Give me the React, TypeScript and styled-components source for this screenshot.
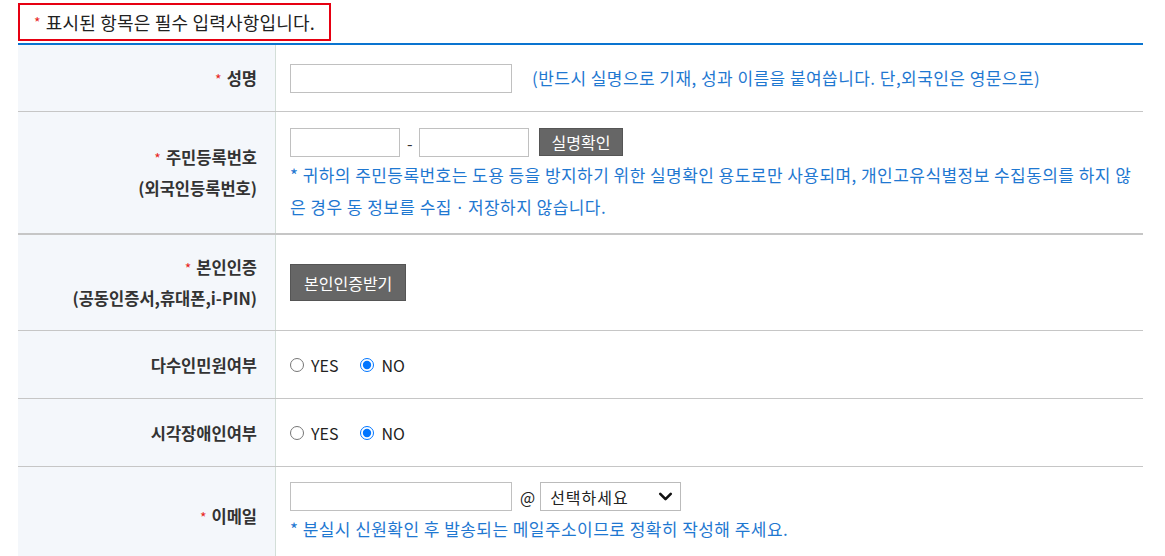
import styled, { createGlobalStyle } from "styled-components";
import { ChevronDown } from "lucide-react";

const GlobalStyle = createGlobalStyle`
	body {
		margin: 0;
		background: #fff;
		font-family: "Noto Sans CJK KR", "Noto Sans", sans-serif;
		color: #333;
	}
	* { box-sizing: border-box; }
`;

const Page = styled.div`
	width: 1143px;
	padding: 3px 0 0 18px;
`;

const Notice = styled.div`
	display: inline-flex;
	align-items: center;
	height: 38px;
	padding: 0 14px;
	border: 2px solid #e60012;
	font-size: 18px;
	letter-spacing: 0.2px;
	color: #222;
`;

const Star = styled.span<{ $tone?: "red" | "blue" }>`
	color: ${(p) => (p.$tone === "blue" ? "#1f78d1" : "#e8271f")};
	font-size: 14px;
	font-weight: 400;
	margin-right: 5px;
`;

const FormTable = styled.div`
	margin-top: 2px;
	border-top: 2px solid #0a74d0;
`;

const Row = styled.div<{ $height: number; $thick?: boolean }>`
	display: grid;
	grid-template-columns: 258px 1fr;
	min-height: ${(p) => p.$height}px;
	border-bottom: ${(p) => (p.$thick ? 2 : 1)}px solid #c6c6c6;
`;

const Label = styled.div`
	display: flex;
	flex-direction: column;
	justify-content: center;
	align-items: flex-end;
	padding-right: 18px;
	background: #f4f7fb;
	border-right: 1px solid #d3ded8;
	font-size: 16.5px;
	font-weight: 700;
	line-height: 30px;
	color: #333;
	text-align: right;
`;

const Value = styled.div<{ $top?: number }>`
	display: flex;
	flex-direction: column;
	justify-content: ${(p) => (p.$top ? "flex-start" : "center")};
	padding: ${(p) => (p.$top ? `${p.$top}px 0 0 14px` : "0 0 0 14px")};
`;

const Line = styled.div`
	display: flex;
	align-items: center;
`;

const TextInput = styled.input<{ $width: number }>`
	width: ${(p) => p.$width}px;
	height: 29px;
	border: 1px solid #c0c0c0;
	background: #fff;
	font-size: 15px;
	padding: 0 6px;
	margin: 0;
`;

const Dash = styled.span`
	margin: 0 6px 0 7px;
	font-size: 16px;
	color: #333;
`;

const Help = styled.p<{ $inline?: boolean }>`
	margin: ${(p) => (p.$inline ? "0 0 0 20px" : "2px 0 0")};
	font-size: 17px;
	letter-spacing: 0.45px;
	line-height: 32px;
	color: #1f78d1;
	word-break: break-all;
`;

const DarkButton = styled.button<{ $tall?: boolean }>`
	margin-left: ${(p) => (p.$tall ? 0 : 10)}px;
	height: ${(p) => (p.$tall ? 37 : 28)}px;
	padding: 0 ${(p) => (p.$tall ? 13 : 12)}px;
	background: #666;
	border: 1px solid #555;
	color: #fff;
	font-family: inherit;
	font-size: 16px;
	cursor: pointer;
	align-self: flex-start;
`;

const RadioLabel = styled.label`
	display: inline-flex;
	align-items: center;
	gap: 7px;
	margin-right: 22px;
	font-size: 16px;
	color: #222;
`;

const Radio = styled.input`
	width: 14px;
	height: 14px;
	margin: 0;
`;

const At = styled.span`
	margin: 0 5px 0 8px;
	font-size: 16px;
	color: #222;
`;

const SelectWrap = styled.div`
	position: relative;
	display: inline-flex;
`;

const Select = styled.select`
	appearance: none;
	width: 141px;
	height: 29px;
	border: 1px solid #bbb;
	background: #fff;
	padding: 0 0 0 9px;
	font-family: inherit;
	font-size: 16px;
	letter-spacing: 1px;
	color: #222;
`;

const Chevron = styled(ChevronDown)`
	position: absolute;
	right: 5px;
	top: 4px;
	pointer-events: none;
	color: #111;
`;

const YesNo = ({ name }: { name: string }) => (
	<Line>
		<RadioLabel>
			<Radio type="radio" name={name} value="Y" />
			YES
		</RadioLabel>
		<RadioLabel>
			<Radio type="radio" name={name} value="N" defaultChecked />
			NO
		</RadioLabel>
	</Line>
);

const App = () => {
	return (
		<Page>
			<GlobalStyle />
			<Notice>
				<Star>*</Star>표시된 항목은 필수 입력사항입니다.
			</Notice>
			<FormTable>
				<Row $height={67}>
					<Label>
						<div><Star>*</Star>성명</div>
					</Label>
					<Value>
						<Line>
							<TextInput $width={222} type="text" />
							<Help $inline>(반드시 실명으로 기재, 성과 이름을 붙여씁니다. 단,외국인은 영문으로)</Help>
						</Line>
					</Value>
				</Row>
				<Row $height={123} $thick>
					<Label>
						<div><Star>*</Star>주민등록번호</div>
						<div>(외국인등록번호)</div>
					</Label>
					<Value $top={16}>
						<Line>
							<TextInput $width={110} type="text" />
							<Dash>-</Dash>
							<TextInput $width={110} type="password" />
							<DarkButton type="button">실명확인</DarkButton>
						</Line>
						<Help>
							* 귀하의 주민등록번호는 도용 등을 방지하기 위한 실명확인 용도로만 사용되며, 개인고유식별정보 수집동의를 하지 않은 경우 동 정보를 수집ㆍ저장하지 않습니다.
						</Help>
					</Value>
				</Row>
				<Row $height={96}>
					<Label>
						<div><Star>*</Star>본인인증</div>
						<div>(공동인증서,휴대폰,i-PIN)</div>
					</Label>
					<Value>
						<Line>
							<DarkButton type="button" $tall>본인인증받기</DarkButton>
						</Line>
					</Value>
				</Row>
				<Row $height={68}>
					<Label>
						<div>다수인민원여부</div>
					</Label>
					<Value>
						<YesNo name="multi" />
					</Value>
				</Row>
				<Row $height={68}>
					<Label>
						<div>시각장애인여부</div>
					</Label>
					<Value>
						<YesNo name="blind" />
					</Value>
				</Row>
				<Row $height={100}>
					<Label>
						<div><Star>*</Star>이메일</div>
					</Label>
					<Value $top={15}>
						<Line>
							<TextInput $width={222} type="text" />
							<At>@</At>
							<SelectWrap>
								<Select defaultValue="">
									<option value="">선택하세요</option>
									<option value="naver.com">naver.com</option>
									<option value="daum.net">daum.net</option>
									<option value="gmail.com">gmail.com</option>
								</Select>
								<Chevron size={21} strokeWidth={3} />
							</SelectWrap>
						</Line>
						<Help>* 분실시 신원확인 후 발송되는 메일주소이므로 정확히 작성해 주세요.</Help>
					</Value>
				</Row>
			</FormTable>
		</Page>
	);
};

export default App;
